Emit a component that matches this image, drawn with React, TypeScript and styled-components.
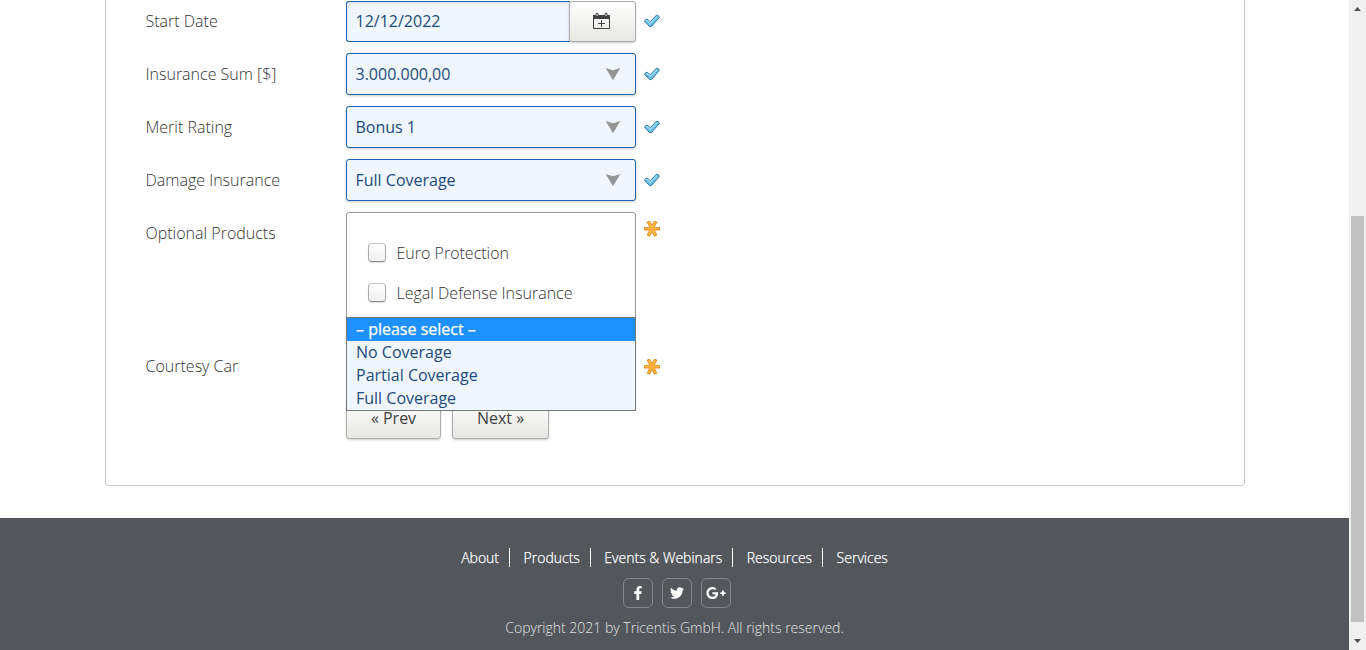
import React from 'react';
import styled, { createGlobalStyle, css } from 'styled-components';
import { FaFacebookF, FaTwitter, FaGooglePlusG } from 'react-icons/fa';

const GlobalStyle = createGlobalStyle`
  * { box-sizing: border-box; }
  body {
    margin: 0;
    background: #fff;
    font-family: 'Open Sans', 'Noto Sans', sans-serif;
    font-size: 16px;
    font-weight: 300;
    color: #333;
    overflow: hidden;
  }
`;

const Window = styled.div`
  display: flex;
  height: 650px;
`;

const Page = styled.div`
  flex: 1;
  display: flex;
  flex-direction: column;
`;

const Panel = styled.main`
  width: 1140px;
  height: 486px;
  margin: 0 0 32px 105px;
  padding: 0 40px 0 39.5px;
  border: 1px solid #ccc;
  border-top: 0;
  border-radius: 0 0 4px 4px;
`;

const Row = styled.div<{ $height?: number }>`
  display: flex;
  height: ${p => p.$height ?? 42}px;
  margin-bottom: 11px;
`;

const Label = styled.label`
  width: 200.5px;
  line-height: 42px;
`;

const Control = styled.div`
  position: relative;
  display: flex;
  width: 290px;
`;

const fieldBox = css`
  display: flex;
  align-items: center;
  border: 1px solid #1c63b0;
  background: #eff6fe;
  color: #1f4a7c;
  font-weight: 400;
  padding: 0 9px 0 8.5px;
  box-shadow: 0 1px 3px rgba(0, 0, 0, 0.2);
`;

const SelectBox = styled.div`
  ${fieldBox}
  flex: 1;
  justify-content: space-between;
  border-radius: 3px;
  padding-right: 14px;
`;

const DateInput = styled.div`
  ${fieldBox}
  width: 224px;
  height: 41px;
  margin-top: 1px;
  padding-bottom: 1px;
  border-right: 0;
  border-radius: 3px 0 0 3px;
  box-shadow: inset 0 1px 3px rgba(0, 0, 0, 0.1);
`;

const buttonFace = css`
  display: flex;
  justify-content: center;
  align-items: center;
  border: 1px solid #adadad;
  border-radius: 3px;
  background: linear-gradient(#fff, #e7e7e3);
  box-shadow: 0 1px 2px rgba(0, 0, 0, 0.2);
`;

const CalendarButton = styled.div`
  ${buttonFace}
  width: 67px;
  height: 41px;
  margin: 1px 0 0 -1px;
  padding: 0 3px 1px 0;
`;

const Mark = styled.span<{ $top: number }>`
  display: flex;
  width: 16px;
  height: 16px;
  margin: ${p => p.$top}px 0 0 8px;
`;

const OptionsBox = styled.div`
  flex: 1;
  padding: 20px 20px 0;
  border: 1px solid #999;
  border-radius: 3px;
`;

const CheckLine = styled.div`
  display: flex;
  align-items: center;
  height: 40px;
`;

const Checkbox = styled.span`
  width: 18px;
  height: 19px;
  margin: -2px 10.5px 0 1px;
  border: 1px solid #aaa;
  border-top-color: #c4c4c4;
  border-bottom-color: #8c8c8c;
  border-radius: 4px;
  background: linear-gradient(#fff, #f0f0f0);
  box-shadow: 0 1px 1px rgba(0, 0, 0, 0.15);
`;

const Menu = styled.div`
  position: absolute;
  top: -28px;
  left: 0;
  width: 290px;
  border: 1px solid #767676;
  background: #eff6fe;
  z-index: 1;
`;

const MenuItem = styled.div<{ $active?: boolean }>`
  height: 23px;
  padding-left: 9px;
  line-height: 23px;
  font-weight: 400;
  color: ${p => (p.$active ? '#fff' : '#1f4a7c')};
  background: ${p => (p.$active ? '#1e90ff' : 'transparent')};
  -webkit-text-stroke: ${p => (p.$active ? '0.25px #fff' : '0')};
`;

const Buttons = styled.div`
  display: flex;
  gap: 11px;
  padding-left: 200.5px;
`;

const Button = styled.div<{ $width: number }>`
  ${buttonFace}
  width: ${p => p.$width}px;
  height: 41px;
  padding-bottom: 2px;
  color: #404040;
  font-weight: 400;
`;

const Footer = styled.footer`
  flex: 1;
  display: flex;
  flex-direction: column;
  align-items: center;
  padding-top: 30px;
  background: #53565b;
  color: #fff;
  font-size: 14px;
`;

const Links = styled.nav`
  display: flex;
  height: 19px;
  line-height: 20px;
  -webkit-text-stroke: 0.25px #fff;
`;

const FooterLink = styled.span`
  padding-right: 10px;
  &:not(:last-child) { border-right: 1px solid #fff; margin-right: 13.5px; }
  &:last-child { padding-right: 0; }
`;

const Socials = styled.div`
  display: flex;
  gap: 9px;
  margin: 11px 0 10px 5px;
`;

const Social = styled.span`
  display: flex;
  align-items: center;
  justify-content: center;
  width: 30px;
  height: 30px;
  border: 1px solid #85878a;
  border-radius: 6px;
`;

const Copyright = styled.div`
  line-height: 20px;
  color: #e2e2e2;
`;

const Scrollbar = styled.div`
  display: flex;
  flex-direction: column;
  align-items: center;
  width: 17px;
  background: #f0f0f0;
`;

const Thumb = styled.div`
  width: 13px;
  height: 406px;
  margin-top: 199px;
  background: #c1c1c1;
`;

const ScrollArrow = styled.svg`
  width: 17px;
  height: 17px;
  &:last-child { margin-top: 10px; }
`;

const CheckMark = () => (
  <Mark $top={13}>
    <svg width="16" height="16" viewBox="0 0 16 16">
      <path d="M.5 8.2Q1.500 6 3 6.200L6.300 8.700 12.300 2.300Q14.500 1.700 15.500 4.300L7.500 13.500 5.700 13.700z" fill="#66bdE8" stroke="#3580a8" strokeLinejoin="round" />
      <path d="m2.200 7.900.8-.4 3.500 2.600L13 3.700" fill="none" stroke="#a0dcf8" strokeWidth="1.200" />
    </svg>
  </Mark>
);

const Asterisk = ({ top }: { top: number }) => (
  <Mark $top={top}>
    <svg width="16" height="16" viewBox="0 0 16 16" fill="none">
      <path d="M0 7.700h16M4.200.2l7.600 14.800M11.800.2 4.200 15" stroke="#e39028" strokeWidth="3.600" />
      <path d="M.8 7.500h14.200M4.700 1l6.700 13M11.300 1 4.600 14" stroke="#ffb340" strokeWidth="2.200" />
    </svg>
  </Mark>
);

const Caret = () => (
  <svg width="16" height="14" viewBox="0 0 16 14">
    <path d="M.7 1 8 3.200 15.300 1 8 13.200z" fill="#959595" />
  </svg>
);

const CalendarIcon = () => (
  <svg width="18" height="18" viewBox="0 0 18 18" fill="none" stroke="#404040">
    <path d="M1.500 4.500h16v12h-16z" />
    <path d="M1 3h17v4H1z" fill="#404040" stroke="none" />
    <path d="M4 4.500V1.800q1-1.500 2 0v2.700zM13 4.500V1.800q1-1.500 2 0v2.700z" fill="#f5f5f3" />
    <path d="M6 11.500h7M9.500 8v7" />
  </svg>
);

const selects = [
  ['Insurance Sum [$]', '3.000.000,00'],
  ['Merit Rating', 'Bonus 1'],
  ['Damage Insurance', 'Full Coverage'],
];

const products = ['Euro Protection', 'Legal Defense Insurance'];
const coverages = ['– please select –', 'No Coverage', 'Partial Coverage', 'Full Coverage'];
const links = ['About', 'Products', 'Events & Webinars', 'Resources', 'Services'];

export default function App() {
  return (
    <>
      <GlobalStyle />
      <Window>
        <Page>
          <Panel>
            <Row>
              <Label>Start Date</Label>
              <Control>
                <DateInput>12/12/2022</DateInput>
                <CalendarButton><CalendarIcon /></CalendarButton>
              </Control>
              <CheckMark />
            </Row>
            {selects.map(([label, value]) => (
              <Row key={label}>
                <Label>{label}</Label>
                <Control><SelectBox>{value}<Caret /></SelectBox></Control>
                <CheckMark />
              </Row>
            ))}
            <Row $height={122}>
              <Label>Optional Products</Label>
              <Control>
                <OptionsBox>
                  {products.map(name => (
                    <CheckLine key={name}><Checkbox />{name}</CheckLine>
                  ))}
                </OptionsBox>
              </Control>
              <Asterisk top={9} />
            </Row>
            <Row>
              <Label>Courtesy Car</Label>
              <Control>
                <Menu>
                  {coverages.map((name, i) => (
                    <MenuItem key={name} $active={i === 0}>{name}</MenuItem>
                  ))}
                </Menu>
              </Control>
              <Asterisk top={14} />
            </Row>
            <Buttons>
              <Button $width={95}>« Prev</Button>
              <Button $width={97}>Next »</Button>
            </Buttons>
          </Panel>
          <Footer>
            <Links>{links.map(name => <FooterLink key={name}>{name}</FooterLink>)}</Links>
            <Socials>
              <Social><FaFacebookF size={14} /></Social>
              <Social><FaTwitter size={14} /></Social>
              <Social><FaGooglePlusG size={20} /></Social>
            </Socials>
            <Copyright>Copyright 2021 by Tricentis GmbH. All rights reserved.</Copyright>
          </Footer>
        </Page>
        <Scrollbar>
          <ScrollArrow viewBox="0 0 17 17"><path d="M5 11h7L8.5 7z" fill="#505050" /></ScrollArrow>
          <Thumb />
          <ScrollArrow viewBox="0 0 17 17"><path d="M5 7h7l-3.500 4z" fill="#505050" /></ScrollArrow>
        </Scrollbar>
      </Window>
    </>
  );
}
